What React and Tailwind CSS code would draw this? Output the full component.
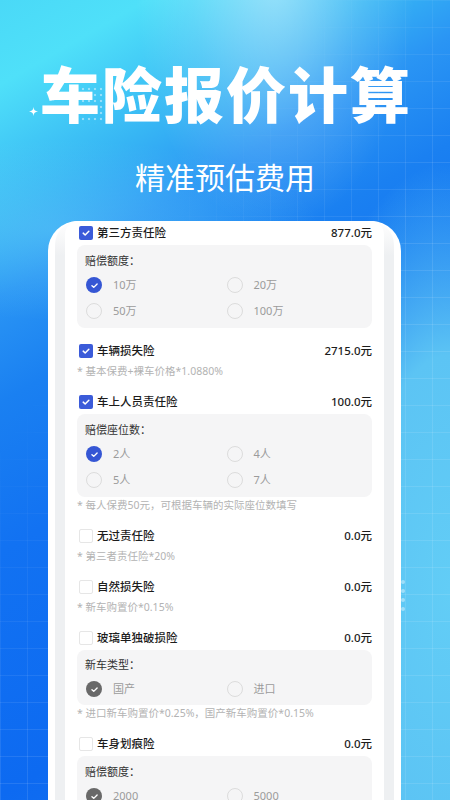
import React from "react";

const items = [
  {
    name: "第三方责任险",
    checked: true,
    price: "877.0元",
    panel: { title: "赔偿额度：", options: ["10万", "20万", "50万", "100万"], tone: "blue" },
  },
  { name: "车辆损失险", checked: true, price: "2715.0元", note: "* 基本保费+裸车价格*1.0880%" },
  {
    name: "车上人员责任险",
    checked: true,
    price: "100.0元",
    panel: { title: "赔偿座位数：", options: ["2人", "4人", "5人", "7人"], tone: "blue" },
    note: "* 每人保费50元，可根据车辆的实际座位数填写",
  },
  { name: "无过责任险", checked: false, price: "0.0元", note: "* 第三者责任险*20%" },
  { name: "自然损失险", checked: false, price: "0.0元", note: "* 新车购置价*0.15%" },
  {
    name: "玻璃单独破损险",
    checked: false,
    price: "0.0元",
    panel: { title: "新车类型：", options: ["国产", "进口"], tone: "gray" },
    note: "* 进口新车购置价*0.25%，国产新车购置价*0.15%",
  },
  {
    name: "车身划痕险",
    checked: false,
    price: "0.0元",
    panel: { title: "赔偿额度：", options: ["2000", "5000", "10000", "20000"], tone: "gray" },
  },
];

function Tick({ className }) {
  return (
    <svg viewBox="0 0 16 16" className={className}>
      <path
        d="M4.3 8.2l2.6 2.5 4.9-5"
        fill="none"
        stroke="white"
        strokeWidth="2"
        strokeLinecap="round"
        strokeLinejoin="round"
      />
    </svg>
  );
}

function Checkbox({ checked }) {
  if (checked) {
    return (
      <div className="w-[14px] h-[14px] rounded-[2px] bg-[#3b5bd9] flex items-center justify-center shrink-0">
        <Tick className="w-[12px] h-[12px]" />
      </div>
    );
  }
  return <div className="w-[14px] h-[14px] rounded-[2px] bg-white border border-[#e6e6e6] shrink-0" />;
}

function Radio({ checked, tone }) {
  if (checked) {
    return (
      <div
        className={
          tone === "blue"
            ? "w-[16px] h-[16px] rounded-full bg-[#3556d4] flex items-center justify-center shrink-0"
            : "w-[16px] h-[16px] rounded-full bg-[#696969] flex items-center justify-center shrink-0"
        }
      >
        <Tick className="w-[11px] h-[11px]" />
      </div>
    );
  }
  return <div className="w-[16px] h-[16px] rounded-full border-[1.5px] border-[#dcdcdc] shrink-0" />;
}

function OptionPanel({ panel }) {
  const single = panel.options.length <= 2;
  return (
    <div className={single ? "bg-[#f5f5f6] rounded-[8px] pt-[7px] pb-[3px]" : "bg-[#f5f5f6] rounded-[8px] pt-[8px] pb-[4px]"}>
      <div className="pl-[8px] text-[11px] leading-[16px] text-[#333333]">{panel.title}</div>
      <div className="grid grid-cols-2 mt-[3px] pl-[9px] pr-[5px]">
        {panel.options.map((opt, i) => (
          <div key={opt} className="flex items-center h-[26px]">
            <Radio checked={i === 0} tone={panel.tone} />
            <span className="ml-[11px] text-[11px] leading-[16px] text-[#9b9b9b]">{opt}</span>
          </div>
        ))}
      </div>
    </div>
  );
}

function InsuranceItem({ item }) {
  return (
    <div className="flex flex-col">
      <div className="flex items-center h-[24px]">
        <div className="ml-[2px]">
          <Checkbox checked={item.checked} />
        </div>
        <span className="ml-[4px] text-[11.5px] font-medium text-[#1c1c1c]">{item.name}</span>
        <span className="ml-auto text-[11.5px] font-medium text-[#1c1c1c]">{item.price}</span>
      </div>
      {item.panel && <OptionPanel panel={item.panel} />}
      {item.note && <div className="text-[10.5px] leading-[16px] text-[#b3b3b3]">{item.note}</div>}
    </div>
  );
}

function Sparkle({ className }) {
  return (
    <svg viewBox="0 0 10 10" className={className}>
      <path d="M5 0C5.4 3.4 6.6 4.6 10 5C6.6 5.4 5.4 6.6 5 10C4.6 6.6 3.4 5.4 0 5C3.4 4.6 4.6 3.4 5 0Z" fill="white" />
    </svg>
  );
}

export default function App() {
  return (
    <div className="relative w-[450px] h-[800px] overflow-hidden font-['Noto_Sans','Noto_Sans_CJK_SC',sans-serif]">
      {/* backdrop: gradient, highlights and grid */}
      <div className="absolute inset-0 bg-[linear-gradient(150deg,#4ad9f7_0%,#4fe0f9_8%,#37b6f4_20%,#2a95f4_28%,#1a80f1_38%,#1272f2_52%,#0d6af1_75%,#1a78f0_100%)]" />
      <div className="absolute inset-0 bg-[radial-gradient(ellipse_170px_430px_at_100%_74%,#62cdf6_0%,#5cc4f4_55%,rgba(92,196,244,0)_100%)]" />
      <div className="absolute inset-0 bg-[radial-gradient(ellipse_140px_250px_at_275px_-20px,rgba(255,255,255,0.45)_0%,rgba(255,255,255,0.14)_60%,rgba(255,255,255,0)_100%)]" />
      <div className="absolute inset-0 bg-[radial-gradient(ellipse_260px_90px_at_60px_230px,rgba(120,220,250,0.35)_0%,rgba(120,220,250,0)_100%)]" />
      <div className="absolute inset-0 bg-[linear-gradient(rgba(255,255,255,0.10)_1px,transparent_1px),linear-gradient(90deg,rgba(255,255,255,0.10)_1px,transparent_1px)] bg-[size:27px_27px] [mask-image:linear-gradient(125deg,transparent_30%,black_55%)]" />

      {/* title ornaments */}
      <div className="absolute left-[74px] top-[86px] w-[38px] h-[38px] bg-[radial-gradient(circle,rgba(215,242,255,0.55)_1.2px,transparent_1.6px)] bg-[size:6px_6px]" />
      <Sparkle className="absolute left-[29px] top-[107px] w-[9px] h-[9px]" />
      <div className="absolute left-[401px] top-[580px] flex flex-col gap-[5px]">
        <div className="w-[4px] h-[4px] rounded-full bg-white/40" />
        <div className="w-[4px] h-[4px] rounded-full bg-white/40" />
        <div className="w-[4px] h-[4px] rounded-full bg-white/40" />
        <div className="w-[4px] h-[4px] rounded-full bg-white/40" />
      </div>

      <div className="relative flex flex-col">
        <h1 className="mt-[62px] h-[60px] leading-[60px] text-center pl-[2px] text-[60px] font-black tracking-[2px] text-white font-['Noto_Sans_CJK_SC',sans-serif]">
          车险报价计算
        </h1>
        <p className="mt-[39px] text-center text-[30px] leading-[30px] text-white font-['Noto_Sans_CJK_SC',sans-serif]">
          精准预估费用
        </p>

        {/* phone frame */}
        <div className="mt-[30px] ml-[48px] w-[353px] bg-white rounded-t-[30px] px-[7px]">
          <div className="rounded-t-[24px] px-[10px] bg-[linear-gradient(to_bottom,#ffffff_0px,#eef0f2_34px)]">
            <div className="bg-white rounded-t-[14px] px-[12px] flex flex-col gap-[11px] pb-[40px]">
              {items.map((item) => (
                <InsuranceItem key={item.name} item={item} />
              ))}
            </div>
          </div>
        </div>
      </div>
    </div>
  );
}
